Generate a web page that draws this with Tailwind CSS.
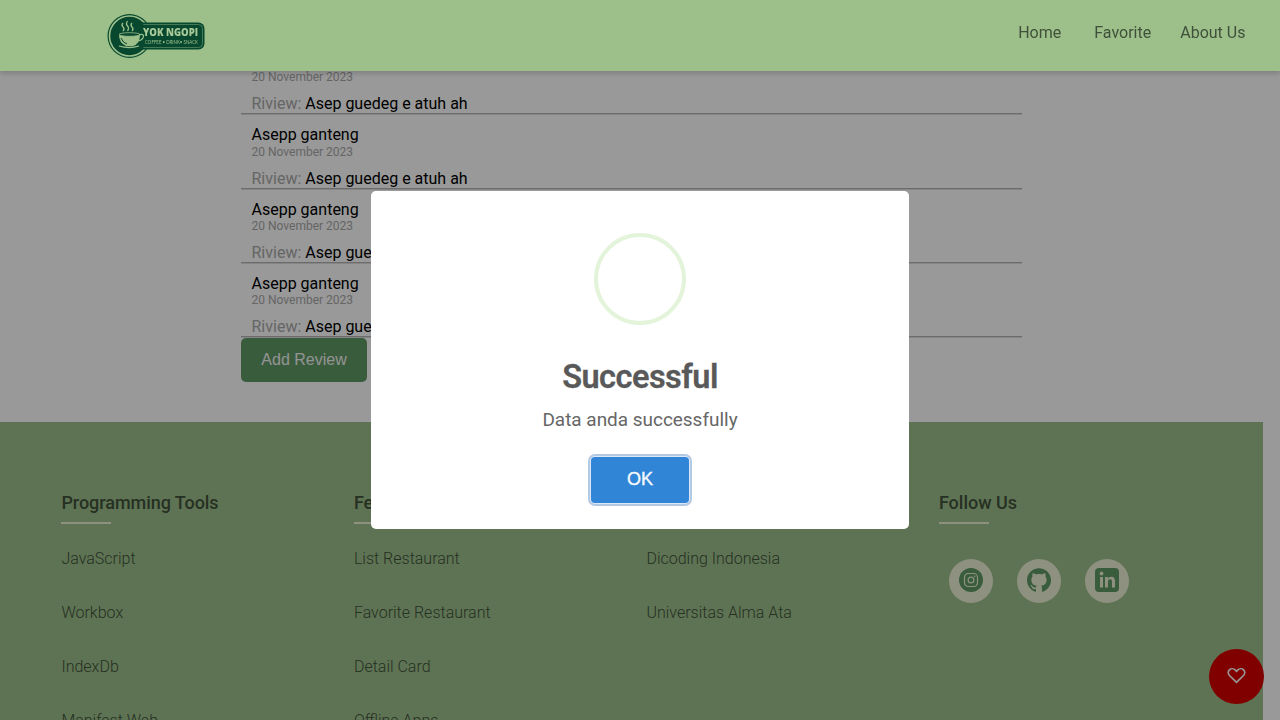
<!DOCTYPE html>
<html lang="en">
<head>
<meta charset="utf-8">
<title>Yok Ngopi</title>
<script src="https://cdn.jsdelivr.net/npm/@tailwindcss/browser@4"></script>
</head>
<body class="h-[720px] w-[1280px] overflow-hidden bg-white font-['Roboto',sans-serif] text-base text-black">
<header class="fixed inset-x-0 top-0 z-20 flex h-[70.500px] items-start justify-between bg-[#9dc08b] pr-[34.600px] pl-[107px] shadow-[0_2px_6px_rgba(0,0,0,0.2)]">
  <svg class="mt-[13px] h-[46px] w-[98px]" viewBox="0 0 98 46">
    <circle cx="22.5" cy="23" r="22" fill="#07482f"/>
    <circle cx="22.5" cy="23" r="20" fill="none" stroke="#9dc08b" stroke-width="1.6"/>
    <path d="M35 9.500H91.500a6 6 0 0 1 6 6V30.500a6 6 0 0 1-6 6H35z" fill="#07482f"/>
    <path d="M35 11.500H91.500a4 4 0 0 1 4 4V30.500a4 4 0 0 1-4 4H35" fill="none" stroke="#5f9168" stroke-width=".7"/>
    <circle cx="22.500" cy="23" r="18" fill="#07482f"/>
    <path d="M12 21.500H33Q33 31 26 33H19Q12 30 12 21.500z" fill="#9dc08b"/>
    <ellipse cx="22.500" cy="21.500" rx="10.500" ry="1.800" fill="#07482f" stroke="#9dc08b" stroke-width=".8"/>
    <path d="M14 25q2 5 6 6" fill="none" stroke="#07482f"/>
    <path d="M32 22q6-2 4 3-2 3-6 3M12 33q10 3 20 0M16 10q-2 2 0 4t0 4M20.500 8q-2 3 0 5t0 5M25 10q-2 2 0 4t0 4" fill="none" stroke="#9dc08b" stroke-width="1.300"/>
    <text x="36" y="22.500" textLength="55" lengthAdjust="spacingAndGlyphs" font-family="Open Sans" font-weight="800" font-size="9.800" fill="#a9ca98">YOK NGOPI</text>
    <text x="38" y="31" textLength="53" lengthAdjust="spacingAndGlyphs" font-family="Lato" font-size="5" fill="#9dc08b">COFFEE • DRINK• SNACK</text>
  </svg>
  <nav class="flex pt-[20.500px] leading-6 text-[#40513b]">
    <a class="mr-[33px]">Home</a><a class="mr-[29px]">Favorite</a><a>About Us</a>
  </nav>
</header>

<div class="h-[720px] w-[1263px] overflow-hidden">
  <main class="h-[422px] pt-[39.050px] pl-[241px]">
    <section class="w-[781px]">
      <div class="h-[74.350px] pt-[12.050px] pl-[10.500px]"><p class="leading-[19.100px]">Asepp ganteng</p><p class="text-xs leading-[14px] text-[#a9a9a9]">20 November 2023</p><p class="mt-[10.100px] h-[19px] leading-[19px]"><span class="text-[#a9a9a9]">Riview:</span> Asep guedeg e atuh ah</p></div>
      <div class="h-[74.350px] border-t border-[#b4b4b4] pt-[11.050px] pl-[10.500px] shadow-[inset_0_1px_#dedede]"><p class="leading-[19.100px]">Asepp ganteng</p><p class="text-xs leading-[14px] text-[#a9a9a9]">20 November 2023</p><p class="mt-[10.100px] h-[19px] leading-[19px]"><span class="text-[#a9a9a9]">Riview:</span> Asep guedeg e atuh ah</p></div>
      <div class="h-[74.350px] border-t border-[#b4b4b4] pt-[11.050px] pl-[10.500px] shadow-[inset_0_1px_#dedede]"><p class="leading-[19.100px]">Asepp ganteng</p><p class="text-xs leading-[14px] text-[#a9a9a9]">20 November 2023</p><p class="mt-[10.100px] h-[19px] leading-[19px]"><span class="text-[#a9a9a9]">Riview:</span> Asep guedeg e atuh ah</p></div>
      <div class="h-[74.350px] border-t border-[#b4b4b4] pt-[11.050px] pl-[10.500px] shadow-[inset_0_1px_#dedede]"><p class="leading-[19.100px]">Asepp ganteng</p><p class="text-xs leading-[14px] text-[#a9a9a9]">20 November 2023</p><p class="mt-[10.100px] h-[19px] leading-[19px]"><span class="text-[#a9a9a9]">Riview:</span> Asep guedeg e atuh ah</p></div>
      <div class="h-px bg-[#b4b4b4] shadow-[0_1px_#dedede]"></div>
    </section>
    <button class="relative mt-[0.400px] block h-[44px] w-[126px] rounded-[5px] bg-[#609966] text-center font-['Liberation_Sans',sans-serif] text-base text-[#f5f5f5]">Add Review</button>
  </main>
  <footer class="grid h-[298px] grid-cols-[292.500px_292.500px_292.500px_292.500px] content-start bg-[#9dc08b] pt-[70px] pl-[61.400px] text-[#40513b]">
    <section>
      <h4 class="h-[32px] text-lg leading-[22px] font-medium tracking-[-0.050px]">Programming Tools</h4>
      <div class="-mt-[2px] h-[2px] w-[50px] bg-[#edf1d6]"></div>
      <ul class="mt-[23px] font-light"><li class="-mt-[3px] h-[54px] leading-[30px]">JavaScript</li><li class="h-[54px] leading-[30px]">Workbox</li><li class="h-[54px] leading-[30px]">IndexDb</li><li class="h-[54px] leading-[30px]">Manifest Web</li></ul>
    </section>
    <section>
      <h4 class="h-[32px] text-lg leading-[22px] font-medium">Features</h4>
      <div class="-mt-[2px] h-[2px] w-[50px] bg-[#edf1d6]"></div>
      <ul class="mt-[23px] font-light"><li class="-mt-[3px] h-[54px] leading-[30px]">List Restaurant</li><li class="h-[54px] leading-[30px]">Favorite Restaurant</li><li class="h-[54px] leading-[30px]">Detail Card</li><li class="h-[54px] leading-[30px]">Offline Apps</li></ul>
    </section>
    <section>
      <h4 class="h-[32px] text-lg leading-[22px] font-medium">Support</h4>
      <div class="-mt-[2px] h-[2px] w-[50px] bg-[#edf1d6]"></div>
      <ul class="mt-[23px] font-light"><li class="-mt-[3px] h-[54px] leading-[30px]">Dicoding Indonesia</li><li class="h-[54px] leading-[30px]">Universitas Alma Ata</li></ul>
    </section>
    <section>
      <h4 class="h-[32px] text-lg leading-[22px] font-medium">Follow Us</h4>
      <div class="-mt-[2px] h-[2px] w-[50px] bg-[#edf1d6]"></div>
      <div class="mt-[35px] flex gap-6 pl-[10px]">
        <a class="flex h-11 w-11 justify-center rounded-full bg-[#edf1d6] pt-[8.500px]"><svg class="h-6 w-6" viewBox="0 0 24 24"><circle cx="12" cy="12" r="12" fill="#609966"/><rect x="5.500" y="5.500" width="13" height="13" rx="3.700" fill="none" stroke="#edf1d6" stroke-width="1.200"/><circle cx="12" cy="12" r="2.900" fill="none" stroke="#edf1d6" stroke-width="1.200"/><circle cx="15.700" cy="8.300" r=".8" fill="#edf1d6"/></svg></a>
        <a class="flex h-11 w-11 justify-center rounded-full bg-[#edf1d6] pt-[8.500px]"><svg class="h-6 w-6" viewBox="0 0 24 24" fill="#609966"><path d="M12 .297c-6.630 0-12 5.373-12 12 0 5.303 3.438 9.800 8.205 11.385.6.113.82-.258.82-.577 0-.285-.01-1.040-.015-2.040-3.338.724-4.042-1.610-4.042-1.610C4.422 18.070 3.633 17.700 3.633 17.700c-1.087-.744.084-.729.084-.729 1.205.084 1.838 1.236 1.838 1.236 1.070 1.835 2.809 1.305 3.495.998.108-.776.417-1.305.76-1.605-2.665-.3-5.466-1.332-5.466-5.930 0-1.310.465-2.380 1.235-3.220-.135-.303-.54-1.523.105-3.176 0 0 1.005-.322 3.300 1.230.96-.267 1.980-.399 3-.405 1.020.006 2.040.138 3 .405 2.280-1.552 3.285-1.230 3.285-1.230.645 1.653.24 2.873.12 3.176.765.84 1.230 1.910 1.230 3.220 0 4.610-2.805 5.625-5.475 5.920.42.360.81 1.096.81 2.220 0 1.606-.015 2.896-.015 3.286 0 .315.21.690.825.570C20.565 22.092 24 17.592 24 12.297c0-6.627-5.373-12-12-12"/></svg></a>
        <a class="flex h-11 w-11 justify-center rounded-full bg-[#edf1d6] pt-[8.500px]"><svg class="h-6 w-6" viewBox="0 0 24 24"><rect width="24" height="24" rx="4" fill="#609966"/><circle cx="6.500" cy="5.500" r="1.900" fill="#edf1d6"/><path d="M5 9h3v10.500H5zM10 9h2.900v1.500c.6-1 1.700-1.800 3.200-1.800 3 0 3.900 1.900 3.900 4.700v6.100h-3v-5.500c0-1.500-.3-2.700-1.800-2.700-1.600 0-2.200 1.100-2.200 2.700v5.500h-3z" fill="#edf1d6"/></svg></a>
      </div>
    </section>
  </footer>
</div>

<button class="fixed top-[649px] left-[1209px] flex h-[55px] w-[55px] items-center justify-center rounded-full bg-[#d60000]">
  <svg class="-mt-[2px] -ml-px h-[17px] w-[19px]" viewBox="0 0 20 18" fill="none" stroke="#fff" stroke-width="1.700"><path d="M10 16.200 2.600 9C.8 7.200.8 4.600 2.500 3c1.800-1.700 4.500-1.400 6 .1L10 4.700l1.500-1.600c1.500-1.500 4.200-1.800 6-.1 1.700 1.600 1.700 4.200-.1 6z"/></svg>
</button>

<div class="fixed inset-0 z-10 bg-black/40"></div>
<div class="pointer-events-none fixed inset-0 z-30 flex items-center justify-center">
  <section role="dialog" class="flex h-[338.500px] w-[538px] flex-col items-center rounded-[5px] bg-white pt-[42.500px]">
    <div class="h-[92px] w-[92px] rounded-full border-4 border-[#e3f4da]"></div>
    <h2 class="mt-[32px] text-[32.500px] leading-[40px] font-semibold tracking-[-0.520px] text-[#595959] [-webkit-text-stroke:0.300px_#595959]">Successful</h2>
    <p class="mt-[10.500px] text-[18.950px] leading-[24px] text-[#666]">Data anda successfully</p>
    <button class="mt-[25px] h-[46px] w-[98px] rounded-[4px] bg-[#3085d6] font-['Liberation_Sans',sans-serif] text-[18px] text-[#f4f8fc] shadow-[0_0_0_1px_#dce8f5,0_0_0_3px_#b3c9e3] [-webkit-text-stroke:0.400px_#f4f8fc]">OK</button>
  </section>
</div>
</body>
</html>
